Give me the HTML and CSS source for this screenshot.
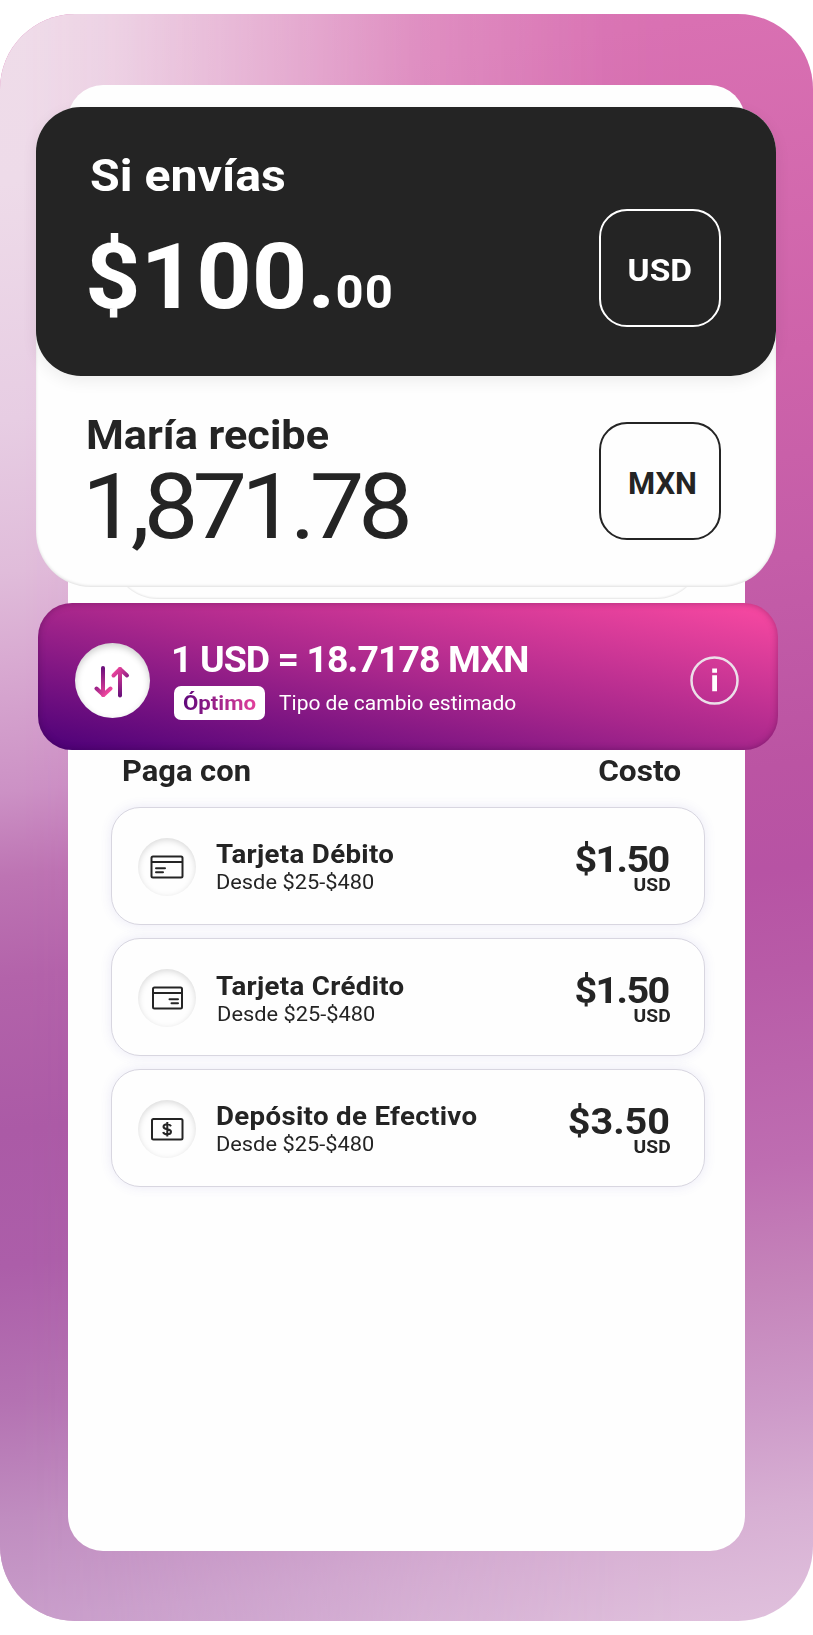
FILE: index.html
```html
<!DOCTYPE html>
<html lang="es">
<head>
<meta charset="utf-8">
<title>Envío de dinero</title>
<link rel="stylesheet" href="styles.css">
</head>
<body>
<main class="phone">
  <div class="screen">
    <section class="transfer">
      <div class="transfer-back"></div>
      <div class="transfer-body">
        <div class="send">
          <div>
            <h2 class="send-label">Si envías</h2>
            <p class="send-amount">$100.<span class="cents">00</span></p>
          </div>
          <div class="currency currency-usd"><span>USD</span></div>
        </div>
        <div class="receive">
          <div>
            <h2 class="receive-label">María recibe</h2>
            <p class="receive-amount">1,871.78</p>
          </div>
          <div class="currency currency-mxn">MXN</div>
        </div>
      </div>
    </section>

    <section class="rate">
      <div class="swap">
        <svg width="36" height="34" viewBox="0 0 36 34" fill="none" stroke-width="4" stroke-linecap="round" stroke-linejoin="round">
          <defs>
            <linearGradient id="down" gradientUnits="userSpaceOnUse" x1="1" y1="20" x2="12" y2="30"><stop offset="0" stop-color="#8a1c84"/><stop offset="1" stop-color="#f0479e"/></linearGradient>
            <linearGradient id="downStem" gradientUnits="userSpaceOnUse" x1="0" y1="3" x2="0" y2="30"><stop offset="0" stop-color="#6d117c"/><stop offset="1" stop-color="#e8429a"/></linearGradient>
            <linearGradient id="upStem" gradientUnits="userSpaceOnUse" x1="0" y1="30" x2="0" y2="3"><stop offset="0" stop-color="#6d117c"/><stop offset="1" stop-color="#e8429a"/></linearGradient>
            <linearGradient id="up" gradientUnits="userSpaceOnUse" x1="22" y1="3" x2="34" y2="13"><stop offset="0" stop-color="#f0479e"/><stop offset="1" stop-color="#8a1c84"/></linearGradient>
          </defs>
          <path d="M9 3V30" stroke="url(#downStem)"/>
          <path d="M2.500 23.500L9.500 30L16.500 23.500" stroke="url(#down)"/>
          <path d="M26 30.500V4" stroke="url(#upStem)"/>
          <path d="M19.500 10.500L26 4L33 10.500" stroke="url(#up)"/>
        </svg>
      </div>
      <div class="rate-text">
        <p class="rate-value">1 USD = 18.7178 MXN</p>
        <div class="rate-note">
          <span class="badge"><span class="badge-text">Óptimo</span></span>
          <span class="rate-caption">Tipo de cambio estimado</span>
        </div>
      </div>
      <div class="info">
        <svg width="49" height="49" viewBox="0 0 49 49"><circle cx="24.500" cy="24.500" r="23" fill="none" stroke="#ecdfe9" stroke-width="2.500"/><path d="M22.200 12.500h4.800v4.300h-4.800zM22.200 19.200h4.800v16h-4.800z" fill="#fff"/></svg>
      </div>
    </section>

    <div class="list-head"><h3 class="head-pay">Paga con</h3><h3 class="head-cost">Costo</h3></div>

    <ul class="methods">
      <li class="method">
        <span class="method-icon">
          <svg width="34" height="24" viewBox="0 0 34 24" fill="none" stroke="#242424" stroke-width="2"><rect x="1.500" y="1.500" width="31" height="21" rx="1.500"/><path d="M1.500 7H32.500"/><path d="M6 13.200H15M6 17.200H13" stroke-linecap="round"/></svg>
        </span>
        <div class="method-text"><h4>Tarjeta Débito</h4><p>Desde $25-$480</p></div>
        <div class="price"><strong>$1.50</strong><span>USD</span></div>
      </li>
      <li class="method method-credit">
        <span class="method-icon">
          <svg width="34" height="24" viewBox="0 0 34 24" fill="none" stroke="#242424" stroke-width="2"><rect x="3" y="1.500" width="29" height="21" rx="1.500"/><path d="M3 7H32"/><path d="M19.500 13.200H28M21.500 17.200H28" stroke-linecap="round"/></svg>
        </span>
        <div class="method-text"><h4>Tarjeta Crédito</h4><p>Desde $25-$480</p></div>
        <div class="price"><strong>$1.50</strong><span>USD</span></div>
      </li>
      <li class="method">
        <span class="method-icon">
          <svg width="34" height="24" viewBox="0 0 34 24" fill="none" stroke="#242424" stroke-width="2"><rect x="2" y="2" width="30.500" height="20.500" rx="1.500"/><path d="M21 9.200C20.300 7.800 19 7.200 17.300 7.200C15 7.200 13.500 8.200 13.500 9.700C13.500 13.200 21 11.300 21 14.800C21 16.400 19.500 17.300 17.300 17.300C15 17.300 13.600 16.500 13.200 14.900M17.300 5V19.500"/></svg>
        </span>
        <div class="method-text"><h4>Depósito de Efectivo</h4><p>Desde $25-$480</p></div>
        <div class="price price-cash"><strong>$3.50</strong><span>USD</span></div>
      </li>
    </ul>
  </div>
</main>
</body>
</html>
```
FILE: styles.css
```css
* { box-sizing: border-box; margin: 0; padding: 0; }

body {
  background: #fff;
  color: #242424;
  font-family: Roboto, "Liberation Sans", sans-serif;
  line-height: 1;
}

h2, h3, h4, .cents, .currency { font-weight: 700; white-space: nowrap; }
p { white-space: nowrap; }

/* Widened letterforms; each rule below sets its own factor */
.send-label, .send-amount, .receive-label, .receive-amount, .rate-value,
.rate-caption, .head-pay, .method-text h4, .method-text p { transform-origin: left center; }
.head-cost, .price strong, .price span { transform-origin: right center; }

/* Gradient frame */
.phone {
  position: relative;
  height: 1607px;
  margin: 14px 0;
  padding: 71px 68px;
  border-radius: 75px;
  overflow: hidden;
  background: linear-gradient(172deg, #e0c1dd 0%, #e0c1dd 100%);
  background: linear-gradient(172deg, #da72b3 0%, #d970b2 6%, #ce63aa 26%, #c45da8 38%, #bb54a3 50%, #b753a4 56%, #b85ba7 62%, #be6db1 73%, #c584ba 80%, #cd99c8 87%, #d7afd3 93%, #e0c1dd 100%);
}
.phone::before {
  content: "";
  position: absolute;
  inset: 0;
  background: linear-gradient(174deg, #efdce9 0%, #eedbe9 10%, #e7cde3 24%, #e0bcda 33%, #d9abd2 38%, #cc91c5 46%, #bd74b3 51%, #b363aa 57%, #ab5aa6 66%, #ac5ea9 74%, #b472b2 82%, #c08dc0 89%, #c89dca 95%, #cba4ce 100%);
  -webkit-mask-image: linear-gradient(to right, #000 3%, rgba(0,0,0,.9) 14%, rgba(0,0,0,.62) 32%, rgba(0,0,0,.28) 52%, rgba(0,0,0,.04) 75%, transparent 85%);
  mask-image: linear-gradient(to right, #000 3%, rgba(0,0,0,.9) 14%, rgba(0,0,0,.62) 32%, rgba(0,0,0,.28) 52%, rgba(0,0,0,.04) 75%, transparent 85%);
}

.screen {
  position: relative;
  width: 677px;
  height: 1466px;
  padding-top: 22px;
  border-radius: 35px;
  background: #fefefe;
}

/* Send and receive amounts */
.transfer { position: relative; width: 740px; height: 479.5px; margin-left: -32px; }
.transfer-back {
  position: absolute;
  left: 76px;
  right: 74px;
  bottom: -12px;
  height: 100px;
  border-radius: 46px;
  box-shadow: inset 0 -1px 2px rgba(0,0,0,.1);
}
.transfer-body {
  position: relative;
  height: 100%;
  border-radius: 45px 45px 55px 55px;
  background: #fefefe;
  box-shadow: inset 0 -1px 3px rgba(0,0,0,.13);
}
.send, .receive { display: flex; justify-content: space-between; align-items: flex-start; }
.send {
  height: 269px;
  padding: 46px 55px 0 49px;
  border-radius: 45px;
  background: #242424;
  color: #fff;
  box-shadow: 0 5px 16px rgba(0,0,0,.07);
}
.send-label { margin-left: 5px; font-size: 45px; transform: scaleX(1.072); }
.send-amount { margin-top: 34px; font-size: 91px; font-weight: 700; transform: scaleX(1.065); }
.cents { font-size: 46px; letter-spacing: 1px; }
.receive { padding: 38.5px 55px 0 48px; }
.receive-label { margin-left: 2px; font-size: 41px; transform: scaleX(1.055); }
.receive-amount { margin-top: 7px; margin-left: -2px; font-size: 90px; letter-spacing: -5.5px; transform: scaleX(1.08); }
.currency {
  display: flex;
  align-items: center;
  justify-content: center;
  width: 122px;
  height: 118px;
  padding-top: 5px;
  border: 2px solid currentColor;
  border-radius: 28px;
  font-size: 31px;
}
.currency span { transform: scaleX(1.08); }
.currency-usd { margin-top: 55.5px; }
.currency-mxn { margin-top: 7px; padding-left: 5px; }

/* Exchange rate bar */
.rate {
  position: relative;
  display: flex;
  align-items: center;
  width: 740px;
  height: 147px;
  margin: 16px 0 0 -30px;
  padding: 0 39.5px 0 36.5px;
  border-radius: 34px;
  background: linear-gradient(to top right, #4b0078 0%, #a9278c 50%, #fb4aa2 100%);
  box-shadow: inset 0 0 7px rgba(40,0,50,.35);
  color: #fff;
}
.swap {
  display: flex;
  align-items: center;
  justify-content: center;
  width: 75px;
  height: 75px;
  margin-top: 9px;
  padding-top: 3px;
  border-radius: 50%;
  background: #fff;
  box-shadow: inset 0 3px 7px rgba(0,0,0,.2);
}
.rate-text { align-self: flex-start; margin-left: 21.5px; padding-top: 39px; }
.rate-value { font-size: 36px; font-weight: 700; letter-spacing: -.9px; transform: scaleX(1.04); }
.rate-note { display: flex; align-items: center; margin: 8px 0 0 3px; }
.badge {
  display: flex;
  align-items: center;
  justify-content: center;
  width: 91px;
  height: 34px;
  border-radius: 7px;
  background: #fff;
}
.badge-text {
  font-size: 21px;
  font-weight: 700;
  line-height: 30px;
  background: linear-gradient(to right, #5f087b, #e2409b);
  -webkit-background-clip: text;
  background-clip: text;
  color: transparent;
  transform: scaleX(1.06);
}
.rate-caption { margin-left: 13.5px; font-size: 20px; transform: scaleX(1.05); }
.info { height: 49px; margin-top: 8px; margin-left: auto; }

/* Payment methods */
.list-head { display: flex; justify-content: space-between; margin-top: 7px; padding: 0 63.5px 0 54px; }
.list-head h3 { font-size: 29px; }
.head-pay { transform: scaleX(1.065); }
.head-cost { transform: scaleX(1.09); }
.methods {
  display: grid;
  grid-auto-rows: 118.5px;
  gap: 12.5px;
  margin: 21.4px 40px 0 43px;
  list-style: none;
}
.method {
  display: flex;
  align-items: flex-start;
  padding: 34px 33px 0 26px;
  border: 1px solid #d8d6e0;
  border-radius: 29px;
  background: #fefefe;
  box-shadow: 0 0 12px rgba(90,80,190,.12);
}
.method-icon {
  display: flex;
  align-items: center;
  justify-content: center;
  width: 58px;
  height: 58px;
  margin-top: -4px;
  border-radius: 50%;
  box-shadow: inset 0 2px 6px rgba(0,0,0,.15);
}
.method-text { margin-left: 20px; }
.method-text h4 { font-size: 25.5px; letter-spacing: .3px; transform: scaleX(1.085); }
.method-text p { margin-top: 5px; font-size: 20px; transform: scaleX(1.09); }
.method-credit .method-text { padding-top: 1px; }
.method-credit .method-text p { padding-left: 1px; }
.price { display: flex; flex-direction: column; align-items: flex-end; margin-left: auto; }
.price strong { margin-right: 2.5px; font-size: 36px; letter-spacing: -1.5px; transform: scaleX(1.1); }
.price-cash strong { margin-right: 1px; letter-spacing: 0; }
.price span { margin-top: -2px; font-size: 18px; font-weight: 700; transform: scaleX(1.07); }
```
